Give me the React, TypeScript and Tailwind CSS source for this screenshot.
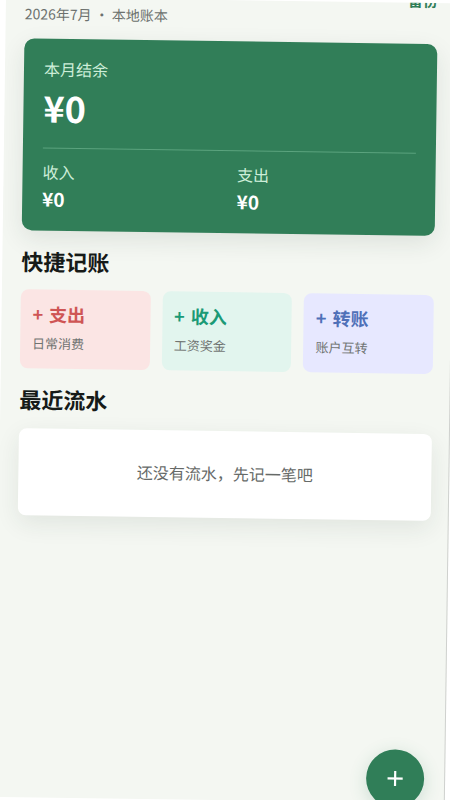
import { Plus } from "lucide-react";

interface QuickEntry {
  label: string;
  hint: string;
  card: string;
  title: string;
}

const quickEntries: QuickEntry[] = [
  {
    label: "支出",
    hint: "日常消费",
    card: "bg-[#fbe5e4]",
    title: "text-[#cf5555]",
  },
  {
    label: "收入",
    hint: "工资奖金",
    card: "bg-[#e2f5ee]",
    title: "text-[#1b9a76]",
  },
  {
    label: "转账",
    hint: "账户互转",
    card: "bg-[#e7e8ff]",
    title: "text-[#4f70b8]",
  },
];

export default function App() {
  return (
    <div className="h-screen overflow-hidden bg-white font-['Noto_Sans_CJK_SC',sans-serif]">
      <div className="relative -mt-[3px] ml-[6px] flex h-screen w-full origin-top-left rotate-[0.8deg] flex-col overflow-hidden border-r border-[#cfd1ce] bg-[#f4f7f2] pr-[17px] pl-[19px]">
        <Header />
        <main>
          <BalanceCard />
          <h2 className="mt-[14px] text-[22px] leading-8 font-bold text-[#161a18]">
            快捷记账
          </h2>
          <div className="mt-[13px] grid grid-cols-3 gap-3">
            {quickEntries.map((entry) => (
              <QuickCard key={entry.label} entry={entry} />
            ))}
          </div>
          <h2 className="mt-[14px] text-[22px] leading-8 font-bold text-[#161a18]">
            最近流水
          </h2>
          <div className="mt-[14px] rounded-lg bg-white pt-[30px] pb-[33px] text-center text-base leading-6 text-[#666a68] shadow-[0_8px_24px_rgba(30,60,45,0.09)]">
            还没有流水，先记一笔吧
          </div>
        </main>
        <button
          type="button"
          aria-label="记一笔"
          className="absolute right-5 -bottom-[5px] flex size-[58px] items-center justify-center rounded-full bg-[#307e58] text-white shadow-[0_4px_18px_rgba(48,126,88,0.2)]"
        >
          <Plus className="size-[26px]" strokeWidth={2} strokeLinecap="butt" />
        </button>
      </div>
    </div>
  );
}

function Header() {
  return (
    <header className="-mt-3 flex items-start justify-between">
      <p className="pt-[18px] text-sm leading-5 text-[#6c716e]">
        2026年7月 · 本地账本
      </p>
      <button
        type="button"
        className="text-[15px] leading-5 font-bold text-[#307e58]"
      >
        备份
      </button>
    </header>
  );
}

function BalanceCard() {
  return (
    <section className="mt-[15px] rounded-[10px] bg-[#317e58] px-5 pt-[18px] pb-[19px] text-white shadow-[0_8px_24px_rgba(30,50,40,0.1)]">
      <p className="text-base leading-6 text-[#cdeed9]">本月结余</p>
      <p className="mt-1 text-[36px] leading-[44px] font-bold">¥0</p>
      <div className="mt-[19px] grid grid-cols-2 gap-4 border-t border-[#5ba37e] pt-[9px]">
        <Amount label="收入" value="¥0" />
        <Amount label="支出" value="¥0" />
      </div>
    </section>
  );
}

function Amount({ label, value }: { label: string; value: string }) {
  return (
    <div>
      <p className="text-base leading-7 text-[#cdeed9]">{label}</p>
      <p className="text-[19px] leading-[26px] font-bold">{value}</p>
    </div>
  );
}

function QuickCard({ entry }: { entry: QuickEntry }) {
  return (
    <button
      type="button"
      className={`rounded-lg px-3 pt-[10px] pb-[13px] text-left ${entry.card}`}
    >
      <span
        className={`flex gap-1.5 text-[18px] leading-7 font-bold ${entry.title}`}
      >
        <span>+</span>
        {entry.label}
      </span>
      <span className="mt-1 block text-[13px] leading-6 text-[#707472]">
        {entry.hint}
      </span>
    </button>
  );
}
